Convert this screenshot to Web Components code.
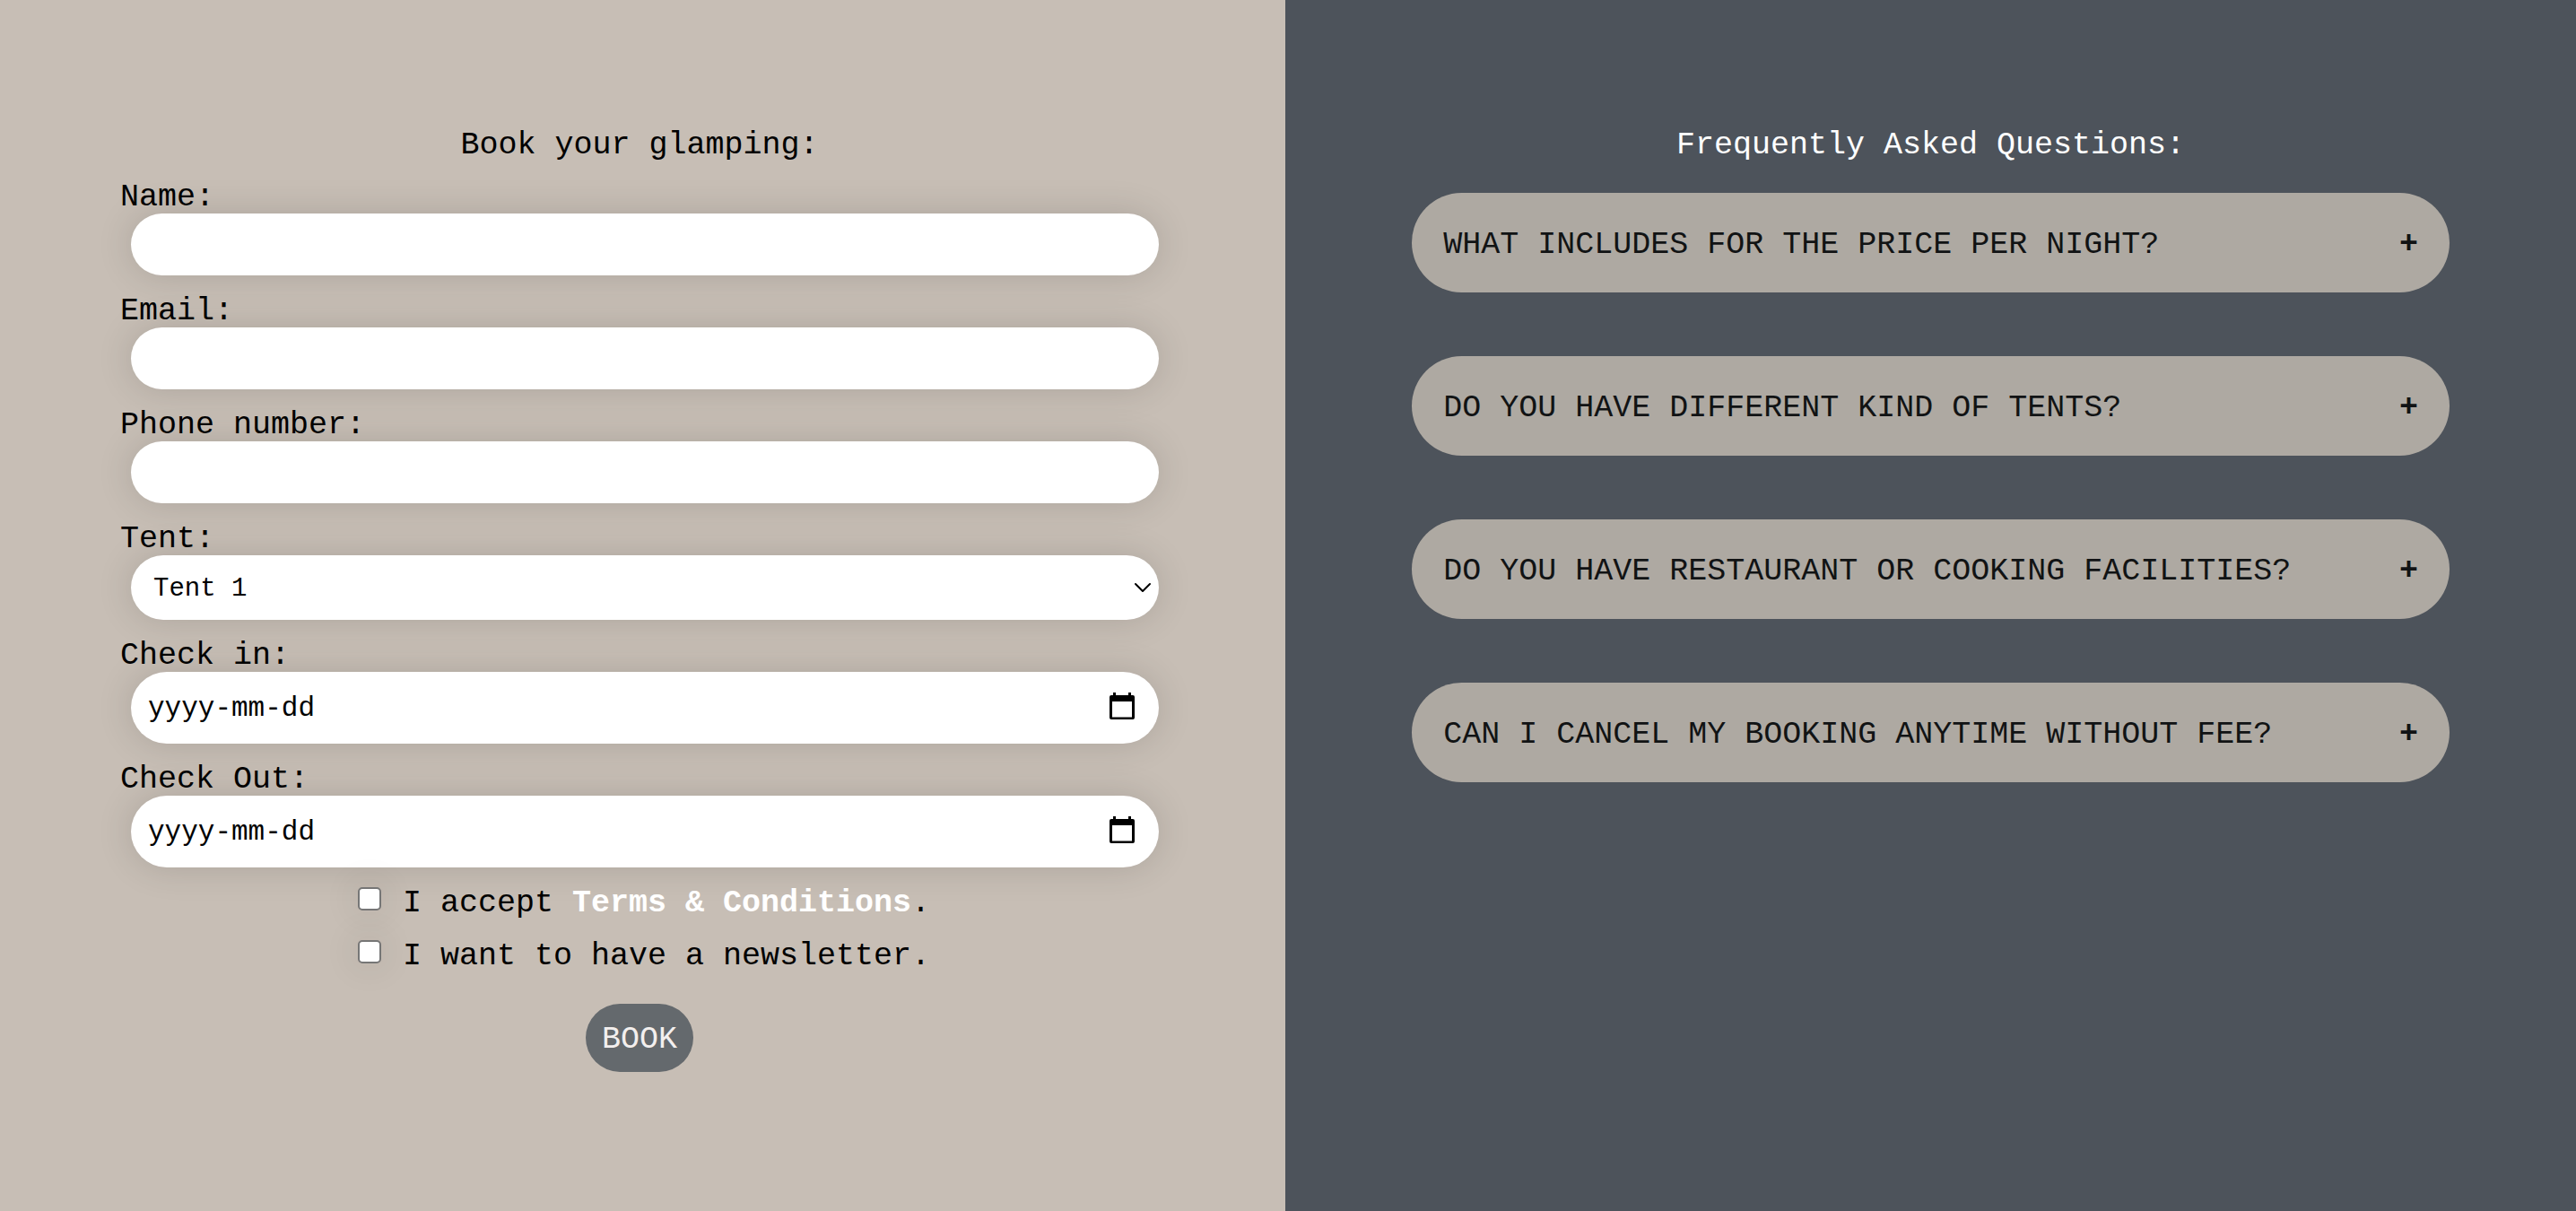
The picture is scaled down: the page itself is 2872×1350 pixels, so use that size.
<!DOCTYPE html>
<html lang="en">
<head>
<meta charset="utf-8">
<title>Glamping booking</title>
<style>
  body { margin: 0; font: 35px/36px "Liberation Mono", "Courier New", monospace; color: #000; }
</style>
</head>
<body>
<booking-page>
  <page-panel class="book" slot="book" heading="Book your glamping:">
    <booking-form>
      <form-field label="Name:" kind="text"></form-field>
      <form-field label="Email:" kind="email"></form-field>
      <form-field label="Phone number:" kind="tel"></form-field>
      <form-field label="Tent:" kind="select" options="Tent 1,Tent 2,Tent 3"></form-field>
      <form-field label="Check in:" kind="date"></form-field>
      <form-field label="Check Out:" kind="date"></form-field>
      <check-option slot="checks">I accept <a href="#terms">Terms &amp; Conditions</a>.</check-option>
      <check-option slot="checks">I want to have a newsletter.</check-option>
    </booking-form>
  </page-panel>
  <page-panel class="faq" slot="faq" heading="Frequently Asked Questions:">
    <faq-item>WHAT INCLUDES FOR THE PRICE PER NIGHT?</faq-item>
    <faq-item>DO YOU HAVE DIFFERENT KIND OF TENTS?</faq-item>
    <faq-item>DO YOU HAVE RESTAURANT OR COOKING FACILITIES?</faq-item>
    <faq-item>CAN I CANCEL MY BOOKING ANYTIME WITHOUT FEE?</faq-item>
  </page-panel>
</booking-page>
<script>
  const define = (name, render) => customElements.define(name, class extends HTMLElement {
    connectedCallback() {
      if (this.shadowRoot) return;
      this.attachShadow({ mode: 'open' }).innerHTML = render(this);
    }
  });

  define('booking-page', () => `
    <style>
      :host { display: grid; grid-template-columns: 49.9% 1fr; min-height: 100vh; }
      ::slotted(.book) { background: #c7beb5; padding: 0 141px 0 134px; --gap: 0px; }
      ::slotted(.faq) { background: #4d535b; padding: 0 141px; --heading: #fff; --gap: 71px; --lead: 35px; }
    </style>
    <slot name="book"></slot>
    <slot name="faq"></slot>`);

  define('page-panel', el => `
    <style>
      :host { display: block; }
      h2 { margin: 144px 0 0; padding-bottom: var(--lead, 22px); font: inherit; text-align: center; color: var(--heading, #000); }
      div { display: flex; flex-direction: column; gap: var(--gap); }
    </style>
    <h2>${el.getAttribute('heading')}</h2>
    <div><slot></slot></div>`);

  define('booking-form', () => `
    <style>
      :host { display: block; }
      .fields { display: flex; flex-direction: column; gap: 22px; }
      .checks { display: flex; flex-direction: column; gap: 23px; width: fit-content; margin: 22px auto 35px; }
      button { display: block; margin: 0 auto; padding: 22px 18px 18px; border: 0; border-radius: 40px;
        background: #64696d; color: #f3efee; font: inherit; }
    </style>
    <form>
      <div class="fields"><slot></slot></div>
      <div class="checks"><slot name="checks"></slot></div>
      <button type="button">BOOK</button>
    </form>`);

  const controls = {
    select: el => `
      <select id="control">${el.getAttribute('options').split(',').map(o => `<option>${o}</option>`).join('')}</select>
      <svg class="chevron" width="20" height="12" viewBox="0 0 20 12" fill="none" stroke="#000" stroke-width="2" stroke-linecap="round" stroke-linejoin="round"><path d="M2 2l8 8 8-8"/></svg>`,
    date: () => `
      <input id="control" class="date" type="text" placeholder="yyyy-mm-dd">
      <svg class="calendar" width="28" height="34" viewBox="0 0 28 34"><path fill="#000" d="M4 0h3v3h14V0h3v3h2a2 2 0 0 1 2 2v23a2 2 0 0 1-2 2H2a2 2 0 0 1-2-2V5a2 2 0 0 1 2-2h2zM3 10v17.500h22V10z"/></svg>`
  };

  define('form-field', el => {
    const kind = el.getAttribute('kind');
    const control = controls[kind] ? controls[kind](el) : `<input id="control" type="${kind}">`;
    return `
    <style>
      :host { display: block; }
      label { display: block; width: fit-content; }
      .box { display: grid; align-items: center; margin-left: 12px; }
      .box > * { grid-area: 1 / 1; }
      input, select { box-sizing: border-box; width: 100%; height: 69px; margin: 0; padding: 1px 19px 0; border: 0;
        border-radius: 40px; background: #fff; box-shadow: 0 0 40px rgba(0, 0, 0, .14);
        font: 31px "Liberation Mono", "Courier New", monospace; color: #000; }
      select { appearance: none; height: 72px; padding: 2px 25px 0; font-size: 29px; }
      .date { height: 80px; }
      ::placeholder { color: #000; opacity: 1; }
      svg { justify-self: end; pointer-events: none; }
      .chevron { margin-right: 8px; }
      .calendar { margin-right: 27px; }
    </style>
    <label for="control">${el.getAttribute('label')}</label>
    <div class="box">${control}</div>`;
  });

  define('check-option', () => `
    <style>
      :host { display: block; }
      label { display: flex; align-items: flex-start; }
      input { appearance: none; box-sizing: border-box; flex: none; width: 26px; height: 26px; margin: 0 24px 0 10px;
        border: 2px solid #767676; border-radius: 5px; background: #fff; box-shadow: 0 0 40px rgba(0, 0, 0, .14); }
      ::slotted(a) { color: #fff; text-decoration: none; font-weight: bold; }
    </style>
    <label><input type="checkbox"><span><slot></slot></span></label>`);

  define('faq-item', () => `
    <style>
      :host { display: block; }
      button { display: flex; justify-content: space-between; width: 100%; padding: 40px 35px 35px; border: 0;
        border-radius: 56px; background: #aea9a2; color: #111314; font: inherit; text-align: left; }
      b { font-weight: bold; }
    </style>
    <button type="button" aria-expanded="false"><span><slot></slot></span><b>+</b></button>`);
</script>
</body>
</html>
